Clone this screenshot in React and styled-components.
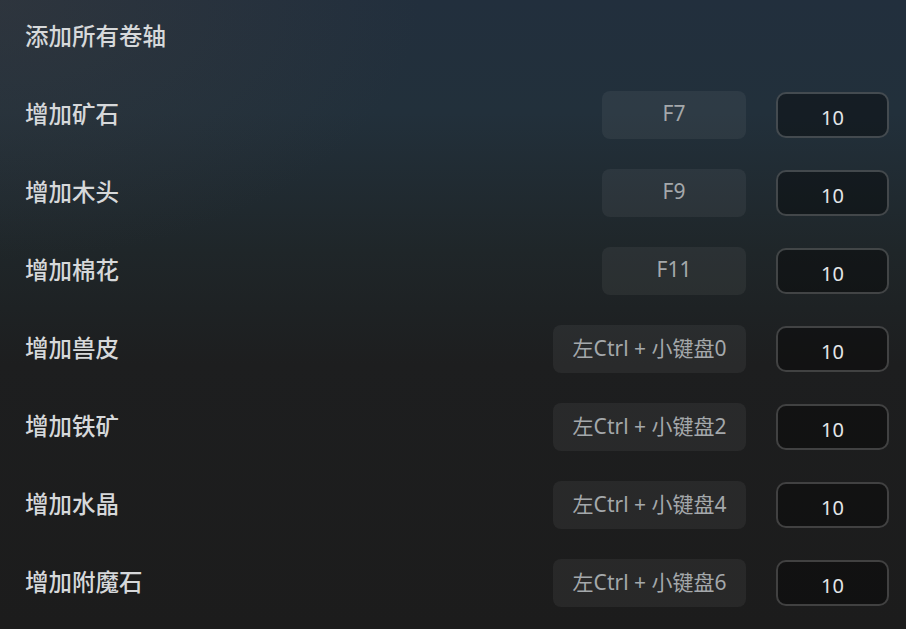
import React from 'react';
import styled, { createGlobalStyle } from 'styled-components';

const GlobalStyle = createGlobalStyle`
	html, body {
		margin: 0;
		padding: 0;
		background: #1c1c1c;
	}
	* {
		box-sizing: border-box;
	}
`;

const Panel = styled.div`
	width: 906px;
	height: 629px;
	overflow: hidden;
	font-family: 'Noto Sans CJK SC', 'Noto Sans', sans-serif;
	background:
		radial-gradient(ellipse 420px 260px at 0 0, rgba(60, 60, 62, 0.45), rgba(60, 60, 62, 0) 100%),
		linear-gradient(180deg, #222f3d 0%, #22303b 18%, #1f2629 40%, #1d1e1f 58%, #1c1c1c 100%);
	padding: 13px 17px 0 25px;
	display: flex;
	flex-direction: column;
	gap: 30px;
`;

const Row = styled.div`
	height: 48px;
	display: flex;
	align-items: center;
`;

const Label = styled.div`
	flex: 1;
	font-size: 23.5px;
	font-weight: 500;
	color: #d6d8da;
	padding-bottom: 5px;
`;

const KeyBox = styled.div`
	min-width: 144px;
	height: 48px;
	padding: 0 19.5px 4px;
	border-radius: 8px;
	background: rgba(255, 255, 255, 0.055);
	color: #a4a8ab;
	font-family: 'Noto Sans', 'Noto Sans CJK SC', sans-serif;
	font-size: 21px;
	display: flex;
	align-items: center;
	justify-content: center;
	white-space: nowrap;
`;

const ValueInput = styled.input`
	margin-left: 30px;
	width: 113px;
	height: 46px;
	border-radius: 10px;
	border: 2px solid rgba(255, 255, 255, 0.2);
	background: rgba(0, 0, 0, 0.38);
	color: #e4e6e8;
	font-family: 'Noto Sans', 'Noto Sans CJK SC', sans-serif;
	font-size: 20px;
	text-align: center;
	padding: 4px 0 0;
	outline: none;
`;

const rows = [
	{ name: '增加矿石', key: 'F7' },
	{ name: '增加木头', key: 'F9' },
	{ name: '增加棉花', key: 'F11' },
	{ name: '增加兽皮', key: '左Ctrl + 小键盘0' },
	{ name: '增加铁矿', key: '左Ctrl + 小键盘2' },
	{ name: '增加水晶', key: '左Ctrl + 小键盘4' },
	{ name: '增加附魔石', key: '左Ctrl + 小键盘6' },
];

const App = () => {
	return (
		<>
			<GlobalStyle />
			<Panel>
				<Row>
					<Label>添加所有卷轴</Label>
				</Row>
				{rows.map((row, index) => (
					<Row key={index}>
						<Label>{row.name}</Label>
						<KeyBox>{row.key}</KeyBox>
						<ValueInput type='text' defaultValue='10' />
					</Row>
				))}
			</Panel>
		</>
	);
};

export default App;
